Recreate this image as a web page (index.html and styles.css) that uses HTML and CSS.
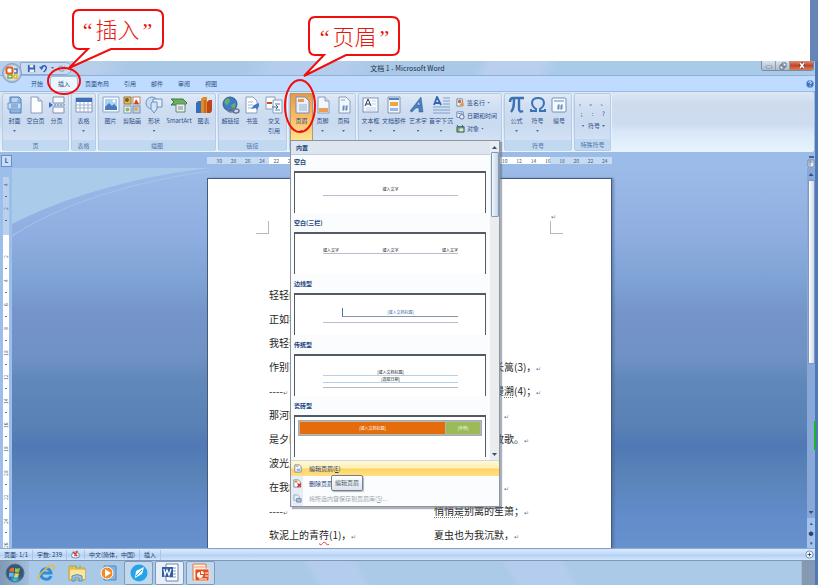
FILE: index.html
```html
<!DOCTYPE html>
<html lang="zh-CN">
<head>
<meta charset="utf-8">
<title>文档 1 - Microsoft Word</title>
<link rel="stylesheet" href="styles.css">
</head>
<body>
<div class="blank"></div>
<main class="app">
  <header class="titlebar">
    <div class="qat">
      <button aria-label="保存"><svg viewBox="0 0 10 10"><path d="M1 1h8v8H1z" fill="#3c62a8"/><path d="M3 1h4v3H3zM3 6h5v3H3z" fill="#e8f0fa"/></svg></button>
      <button aria-label="撤消"><svg viewBox="0 0 10 10"><path d="M3 5c0-4 6-4 5 0c0 2-2 3-3 4" fill="none" stroke="#2f62b4" stroke-width="1.6"/><path d="M0 3l5 0l-2 4z" fill="#2f62b4"/></svg></button>
      <span class="caret"></span>
      <button aria-label="恢复"><svg viewBox="0 0 10 10"><path d="M7 4c-2-3-6-1-5 2c1 2 4 3 6 1" fill="none" stroke="#9ab0cf" stroke-width="1.5"/><path d="M9 1v5H5z" fill="#9ab0cf"/></svg></button>
    </div>
    <h1>文档 1 - Microsoft Word</h1>
    <div class="winbtns">
      <button aria-label="最小化"><svg viewBox="0 0 14 10"><rect x="4" y="5" width="6" height="2" rx="1" fill="#fff" stroke="#5a6a80" stroke-width=".7"/></svg></button>
      <button aria-label="还原"><svg viewBox="0 0 14 10"><path d="M6 2h4v4H6zM4 4h4v4H4z" fill="#fff" stroke="#5a6a80"/></svg></button>
      <button class="close" aria-label="关闭"><svg viewBox="0 0 14 10"><path d="M5 2l4 5M9 2l-4 5" stroke="#7c3430" stroke-width="3"/><path d="M5 2l4 5M9 2l-4 5" stroke="#fff" stroke-width="1.6"/></svg></button>
    </div>
    <button class="office" aria-label="Office"><svg viewBox="0 0 20 20"><defs><radialGradient id="orb"><stop offset="0" stop-color="#fff"/><stop offset=".7" stop-color="#dbe4ef"/><stop offset="1" stop-color="#91a6c4"/></radialGradient></defs><circle cx="10" cy="10" r="9.5" fill="url(#orb)" stroke="#8da2bf"/><rect x="4.500" y="4.500" width="6" height="6" rx="1.500" fill="#fff" stroke="#e2591c" stroke-width="2"/><path d="M12 6h3v4h-3" fill="none" stroke="#3f78c4" stroke-width="1.5"/><path d="M6 12h4v3H6z" fill="#fff" stroke="#79ab39" stroke-width="1.5"/><path d="M12 12h3v3h-3z" fill="#fff" stroke="#eeb11b" stroke-width="1.5"/></svg></button>
  </header>
  <nav class="tabs">
    <a href="#home">开始</a><a href="#insert" class="active">插入</a><a href="#layout">页面布局</a><a href="#refs">引用</a><a href="#mail">邮件</a><a href="#review">审阅</a><a href="#view">视图</a>
    <button class="help" aria-label="帮助"><svg viewBox="0 0 8 8"><circle cx="4" cy="4" r="3.7" fill="#3572c6" stroke="#8ab5e8" stroke-width=".6"/><path d="M2.7 3c0-2 3-1.500 2.500 0L4 4.400M4 5.500v1" stroke="#fff" fill="none"/></svg></button>
  </nav>
  <section class="ribbon">
    <div class="group">
      <div class="items">
        <button class="item"><svg viewBox="0 0 18 18"><path d="M4 1h9l2 2v14H4z" fill="#8eb5e2" stroke="#5582bd"/><path d="M6 3h6M6 5h5" stroke="#e9f2fc"/><path d="M2 7h13v6H2z" fill="#c9def5" stroke="#6b98cf"/><path d="M5 9h7M5 11h7" stroke="#5582bd"/></svg><span>封面</span><i class="caret"></i></button>
        <button class="item"><svg viewBox="0 0 18 18"><path d="M4 1h7l4 4v12H4z" fill="#fbfdff" stroke="#8a9cb8"/><path d="M11 1v4h4" fill="#cfdded" stroke="#8a9cb8"/></svg><span>空白页</span></button>
        <button class="item"><svg viewBox="0 0 18 18"><path d="M5 1h11v6H5zM5 11h11v6H5z" fill="#f5f8fc" stroke="#8293ad"/><path d="M6 9h11" stroke="#4a7cc2" stroke-dasharray="2 1"/><path d="M1 6v6l4-3z" fill="#3d70ba"/></svg><span>分页</span></button>
      </div>
      <h2>页</h2>
    </div>
    <div class="group">
      <div class="items">
        <button class="item"><svg viewBox="0 0 18 18"><path d="M1 2h16v14H1z" fill="#fff" stroke="#7c96bd"/><path d="M1 2h16v4H1z" fill="#3e70ba"/><path d="M1 9h16M1 12h16M5 6v10M9 6v10M13 6v10" stroke="#9fb3d0"/></svg><span>表格</span><i class="caret"></i></button>
      </div>
      <h2>表格</h2>
    </div>
    <div class="group">
      <div class="items">
        <button class="item"><svg viewBox="0 0 18 18"><path d="M1 1h16v15H1z" fill="#f8fbff" stroke="#8aa7cb"/><path d="M3 3h12v11H3z" fill="#a9d0f5"/><path d="M3 14v-3l4-4 3 3 2-2 3 3v3z" fill="#4a7bb7"/><circle cx="12" cy="5" r="1.500" fill="#fff"/></svg><span>图片</span></button>
        <button class="item mid"><svg viewBox="0 0 18 18"><rect x="1" y="1" width="7" height="7" fill="#e7bd52" stroke="#98793c"/><rect x="10" y="1" width="7" height="7" fill="#fff" stroke="#b7866b"/><path d="M11 8l2-5 3 5z" fill="#c34826"/><rect x="1" y="10" width="7" height="7" fill="#f5f3dd" stroke="#739ad0"/><rect x="10" y="10" width="7" height="7" fill="#bcd5ef" stroke="#7890b7"/><circle cx="4" cy="4" r="2" fill="#7c572b"/><circle cx="4.500" cy="13.500" r="2" fill="#8eb46b"/><circle cx="13" cy="13" r="2" fill="#e1ab4d"/></svg><span>剪贴画</span></button>
        <button class="item mid"><svg viewBox="0 0 18 18"><circle cx="7" cy="7" r="6" fill="#c7dcf3" stroke="#6d91c2"/><path d="M8 3h9v8H8z" fill="#e1edfb" stroke="#6d91c2"/><path d="M7 6h5v7l-3 4-3-4V8z" fill="#d4e4f7" stroke="#6d91c2"/></svg><span>形状</span><i class="caret"></i></button>
        <button class="item smart"><svg viewBox="0 0 18 18"><path d="M1 3h12l4 4-4 4v-2H1l3-3z" fill="#6cad5c" stroke="#387b40"/><path d="M6 8h9v8H6z" fill="#eaf3e6" stroke="#658579"/><path d="M8 11h5M8 13h5" stroke="#758a9e"/></svg><span>SmartArt</span></button>
        <button class="item"><svg viewBox="0 0 18 18"><path d="M1 7l2-2h3v12H1z" fill="#326fbd"/><path d="M6 3l2-2h4v16H6z" fill="#e58a22"/><path d="M12 6l2-2h3v11l-2 2h-3z" fill="#c6441d"/><path d="M10 4v13M15 7v10" stroke="#a84f15"/></svg><span>图表</span></button>
      </div>
      <h2>插图</h2>
    </div>
    <div class="group">
      <div class="items">
        <button class="item"><svg viewBox="0 0 18 18"><circle cx="8" cy="8" r="7" fill="#397dc8" stroke="#365c90"/><path d="M3 4c3-3 5-1 5 1s-3 2-2 4c-2 0-4-2-3-5zM9 9l4-2c2 2-1 6-3 6z" fill="#69ad69"/><ellipse cx="9" cy="14" rx="3" ry="2" fill="none" stroke="#667891" stroke-width="1.500"/><ellipse cx="14" cy="15" rx="3" ry="2" fill="none" stroke="#667891" stroke-width="1.500"/></svg><span>超链接</span></button>
        <button class="item mid"><svg viewBox="0 0 18 18"><path d="M3 1h7l4 4v12H3z" fill="#fbfdff" stroke="#8a9cb8"/><path d="M5 6h5M5 9h5M5 12h4" stroke="#a5b5cb"/><path d="M8 13l3-4 5-2v3l-2 4-1-2z" fill="#3f78c3"/></svg><span>书签</span></button>
        <button class="item mid"><svg viewBox="0 0 18 18"><path d="M1 1h9v12H1z" fill="#fbfdff" stroke="#8a9cb8"/><path d="M8 4h9v13H8z" fill="#f5f9ff" stroke="#8a9cb8"/><path d="M2 6h5v2H2z" fill="#ce4c28"/><path d="M10 8h5M10 14h5" stroke="#587fbb"/><path d="M7 11h6l-2-2M13 11l-2 2" stroke="#3868ac" fill="none"/></svg><span>交叉<br>引用</span></button>
      </div>
      <h2>链接</h2>
    </div>
    <div class="group">
      <div class="items">
        <div class="menuhost">
        <button class="item pressed" aria-expanded="true"><svg viewBox="0 0 18 18"><path d="M3 1h9l4 4v12H3z" fill="#e8f0fb" stroke="#7c8dac"/><path d="M5 3h6v3H5z" fill="#ef9a42"/><path d="M6 8h8v7H6z" fill="#bed1ea"/></svg><span>页眉</span><i class="caret"></i></button>
        <div class="gallery">
          <h3>内置</h3>
          <div class="scroll">
            <div class="list">
              <h4>空白</h4>
              <div class="preview blank1"><p>键入文字</p><hr></div>
              <h4>空白(三栏)</h4>
              <div class="preview three"><p><span>键入文字</span><span>键入文字</span><span>键入文字</span></p><hr></div>
              <h4>边线型</h4>
              <div class="preview edge"><p>[键入文档标题]</p><hr></div>
              <h4>传统型</h4>
              <div class="preview classic"><p>[键入文档标题]</p><hr><p>[选取日期]</p><hr><hr class="grey"></div>
              <h4>瓷砖型</h4>
              <div class="preview tile"><p><span>[键入文档标题]</span><span>[年份]</span></p></div>
            </div>
            <div class="bar"><i class="up"></i><b></b><i class="down"></i></div>
          </div>
          <div class="menu">
            <button class="hot"><svg viewBox="0 0 10 10"><path d="M2 1h5l2 2v6H2z" fill="#fff" stroke="#7189ae"/><path d="M3 2h3v1H3z" fill="#e77b2b"/><path d="M4 5h4v3H4z" fill="#9db9de"/></svg><span>编辑页眉(<u>E</u>)</span></button>
            <button><svg viewBox="0 0 10 10"><path d="M1 1h5l2 2v6H1z" fill="#fff" stroke="#7189ae"/><path d="M2 2h3v2H2z" fill="#e77b2b"/><path d="M5 5l4 4M9 5L5 9" stroke="#d92c20" stroke-width="1.500"/></svg><span>删除页眉</span></button>
            <button disabled><svg viewBox="0 0 10 10"><path d="M1 1h4l2 2v4H1z" fill="#e6edf7" stroke="#93a6c3"/><path d="M4 5h5v4H4z" fill="#a9bddb" stroke="#758db3"/></svg><span>将所选内容保存到页眉库(<u>S</u>)...</span></button>
            <div class="tip" role="tooltip">编辑页眉</div>
          </div>
        </div>
        </div>
        <button class="item"><svg viewBox="0 0 18 18"><path d="M4 1h7l4 4v12H4z" fill="#f2f7fd" stroke="#8a9cb8"/><path d="M11 1v4h4" fill="#d7e2f0" stroke="#8a9cb8"/><path d="M5 12h9v4H5z" fill="#ee9b55"/></svg><span>页脚</span><i class="caret"></i></button>
        <button class="item"><svg viewBox="0 0 18 18"><path d="M4 1h7l4 4v12H4z" fill="#f2f7fd" stroke="#8a9cb8"/><path d="M6 3h4v2H6z" fill="#b9cce5"/><path d="M9 9l-1 6M12 9l-1 6M7 11h6M7 13h6" stroke="#4c78b5" stroke-width=".8"/></svg><span>页码</span><i class="caret"></i></button>
      </div>
      <h2>页眉和页脚</h2>
    </div>
    <div class="group">
      <div class="items">
        <button class="item"><svg viewBox="0 0 18 18"><rect x="1" y="2" width="15" height="14" fill="#f7faff" stroke="#8296b4"/><path d="M3 10l3-7 3 7M4 8h4" stroke="#2c3b55" fill="none"/><path d="M10 5h4M10 8h4M4 12h10M4 14h10" stroke="#c3d2e6"/></svg><span>文本框</span><i class="caret"></i></button>
        <button class="item parts"><svg viewBox="0 0 18 18"><path d="M3 1h12v16H3z" fill="#f3f7fd" stroke="#8296b4"/><path d="M4 2h10v2H4z" fill="#5284c2"/><path d="M5 6h8v4H5z" fill="#eda742"/><path d="M5 12h8v3H5z" fill="#9abae1"/></svg><span>文档部件</span><i class="caret"></i></button>
        <button class="item mid"><svg viewBox="0 0 18 18"><path d="M1 15L12 1l2 15h-4l0-4H7l-4 4zM8 9h3l-1-4z" fill="#4b7fbd" stroke="#2f5f9e" stroke-width=".5"/></svg><span>艺术字</span><i class="caret"></i></button>
        <button class="item drop"><svg viewBox="0 0 18 18"><path d="M2 9l3-8 4 8M3 7h5" stroke="#3267ae" stroke-width="1.800" fill="none"/><path d="M11 2h7M11 5h7M11 8h7M1 11h17M1 14h17M1 17h17" stroke="#7f9fcd"/></svg><span>首字下沉</span><i class="caret"></i></button>
        <div class="stack">
          <button><svg viewBox="0 0 10 10"><path d="M1 1h6v8H1z" fill="#fff" stroke="#697e9e"/><circle cx="4" cy="4" r="2" fill="#c96a3b"/><path d="M3 8l5-4 1 5z" fill="#de9b48"/></svg>签名行<i class="caret"></i></button>
          <button><svg viewBox="0 0 10 10"><path d="M1 1h7v6H1z" fill="#fff" stroke="#5d7eae"/><path d="M2 3h5" stroke="#5d7eae"/><circle cx="6.500" cy="6.500" r="2.500" fill="#e6effb" stroke="#49648e"/></svg>日期和时间</button>
          <button><svg viewBox="0 0 10 10"><path d="M1 3h8v6H1z" fill="#79ae62" stroke="#3f5f63"/><path d="M1 1l3 3M7 1v3" stroke="#2e5595"/><path d="M4 5h4v3H4z" fill="#dce8f5"/></svg>对象<i class="caret"></i></button>
        </div>
      </div>
      <h2>文本</h2>
    </div>
    <div class="group">
      <div class="items">
        <button class="item"><svg viewBox="0 0 18 18"><path d="M2 6c0-3 1-4 3-4h11M6 3c0 6 0 10-3 13M11 3v10c0 3 2 3 4 2" fill="none" stroke="#3c72b5" stroke-width="2.400"/></svg><span>公式</span><i class="caret"></i></button>
        <button class="item"><svg viewBox="0 0 18 18"><path d="M2 13v2h5v-2C1 9 2 2 9 2s8 7 2 11v2h5v-2" fill="none" stroke="#3c72b5" stroke-width="2"/></svg><span>符号</span><i class="caret"></i></button>
        <button class="item mid"><svg viewBox="0 0 18 18"><rect x="2" y="2" width="14" height="14" rx="1" fill="#f5f9fe" stroke="#7790b5"/><path d="M4 5h10" stroke="#abc0de" stroke-width="2"/><path d="M9 8l-1 6M12 8l-1 6M7 10h6M7 12h6" stroke="#4c78b5" stroke-width=".8"/></svg><span>编号</span></button>
      </div>
      <h2>符号</h2>
    </div>
    <div class="group">
      <div class="symbols">
        <button>，</button><button>。</button><button>、</button>
        <button>;</button><button>:</button><button>?</button>
        <button class="wide"><b>•</b> 符号<i class="caret"></i></button>
      </div>
      <h2>特殊符号</h2>
    </div>
  </section>
  <div class="rulerrow">
    <button class="tabsel" aria-label="制表符">L</button>
    <div class="hruler">
      <span>30</span><span>28</span><span>26</span><span>24</span><span>22</span><span>20</span><span>18</span><span>16</span><span>14</span><span>12</span><span>10</span><span>8</span><span>6</span><span>4</span><span>2</span><span></span><span>2</span><span>4</span><span>6</span><span>8</span><span>10</span><span>12</span><span>14</span><span>16</span><span>18</span><span>20</span><span>22</span><span>24</span>
    </div>
    <button class="rulerbtn" aria-label="标尺"><svg viewBox="0 0 8 14"><path d="M2 3h5" stroke="#33445e" stroke-width="1.500"/><path d="M1 6h6v7H1z" fill="#e9eff8" stroke="#7387a5"/><path d="M2 8h4M3 6v6" stroke="#7387a5"/></svg></button>
  </div>
  <div class="workspace">
    <div class="vruler"><div>
      <span>4</span><span>2</span><span></span><span>2</span><span>4</span><span>6</span><span>8</span><span>10</span><span>12</span><span>14</span><span>16</span><span>18</span><span>20</span><span>22</span><span>24</span><span>26</span>
    </div></div>
    <div class="canvas">
      <svg class="swoosh" viewBox="0 0 195 60" preserveAspectRatio="none" aria-hidden="true"><path d="M0 0h195C120 8 50 30 0 56z" fill="#abcbea"/><path d="M0 68C50 35 120 13 195 3" fill="none" stroke="#a7c5ea"/></svg>
      <article class="page">
        <div class="marks"><i></i><i><s>↵</s></i></div>
        <div class="poem">
          <div>
            <p>轻轻的我走了，</p><p>正如我轻轻的来；</p><p>我轻轻的招手，</p><p>作别西天的云彩。</p><p>----<s>↵</s></p><p>那河畔的金柳，</p><p>是夕阳中的新娘；</p><p>波光里的艳影，</p><p>在我的心头荡漾。</p><p>----<s>↵</s></p><p>软泥上的青<em class="red">荇</em>(1)，<s>↵</s></p>
          </div>
          <div>
            <p></p><p></p><p></p><p>寻梦？撑一支长篙(3)，<s>↵</s></p><p>向青草更青处漫<em>溯</em>(4)；<s>↵</s></p><p>满载一船星辉，<s>↵</s></p><p>在星辉斑斓里放歌。<s>↵</s></p><p></p><p>但我不能放歌，<s>↵</s></p><p><em>悄悄是</em>别离的笙箫；<s>↵</s></p><p>夏虫也为我沉默，<s>↵</s></p>
          </div>
        </div>
      </article>
    </div>
    <div class="vscroll"><i class="up"></i><b></b><i class="down"></i><em>▴</em><em>●</em><em>▾</em></div>
  </div>
  <footer class="status">
    <span>页面: 1/1</span><span>字数: 239</span><span><svg viewBox="0 0 10 10"><path d="M1 4l4-2 4 2v4l-4 1-4-1z" fill="#fff" stroke="#6382b0"/><path d="M2 2l5 5M7 1L4 7" stroke="#d53a29" stroke-width="1.500"/></svg></span><span>中文(简体，中国)</span><span>插入</span>
    <button aria-label="放大"><svg viewBox="0 0 10 10"><circle cx="5" cy="5" r="4" fill="#f4f8fd" stroke="#6e83a4"/><path d="M5 3v4M3 5h4" stroke="#334b74"/></svg></button>
  </footer>
</main>
<nav class="taskbar">
  <button class="start" aria-label="开始"><svg viewBox="0 0 20 20"><defs><radialGradient id="win" cy=".9"><stop offset="0" stop-color="#35d0f5"/><stop offset=".6" stop-color="#2c6796"/><stop offset="1" stop-color="#385573"/></radialGradient></defs><circle cx="10" cy="10" r="9" fill="url(#win)" stroke="#52718f"/><path d="M5 6q2-2 4-1v4q-2-1-5 0z" fill="#ef6534"/><path d="M10 5q2 1 5 0l-1 4q-2 1-4 0z" fill="#8dcc47"/><path d="M4 10q3-1 5 0l-1 4q-2-1-4 0z" fill="#59b9f1"/><path d="M10 10q2 1 4 0l-1 4q-2 1-4 0z" fill="#fccc3f"/></svg></button>
  <button aria-label="Internet Explorer"><svg viewBox="0 0 20 20"><path d="M15 13c-2 5-10 4-10-2s9-8 10-1H6" fill="none" stroke="#2d8edb" stroke-width="3"/><path d="M3 17C-1 14 14 0 18 3c1 1 0 3-1 4" fill="none" stroke="#ecb83a" stroke-width="1.500"/></svg></button>
  <button aria-label="资源管理器"><svg viewBox="0 0 20 20"><path d="M2 3h6l1 2h9v12H2z" fill="#efc659" stroke="#ca9d3d"/><path d="M3 7h15v9H3z" fill="#fbe69b"/><path d="M5 2v4M9 2v4M13 2v4" stroke="#87b866"/><path d="M5 18v-5q5-3 10 0v5h-3v-3H8v3z" fill="#96c5ea" stroke="#5990bd"/></svg></button>
  <button aria-label="媒体播放器"><svg viewBox="0 0 20 20"><path d="M6 3h12v14H6z" fill="#83b3e0" stroke="#5487be"/><circle cx="9" cy="10" r="6" fill="#f58a23" stroke="#fff"/><path d="M7 6l6 4-6 4z" fill="#fff"/></svg></button>
  <button class="open" aria-label="浏览器"><svg viewBox="0 0 20 20"><circle cx="10" cy="10" r="8.500" fill="#24a5e8"/><path d="M6 15l1-7 8-4-2 7z" fill="#fff"/><path d="M7 13l6-6" stroke="#24a5e8"/></svg></button>
  <button class="open current" aria-label="Word"><svg viewBox="0 0 20 20"><path d="M6 1h12v17H6z" fill="#fff" stroke="#6c83a8"/><path d="M9 5h7M9 8h7M9 11h7M9 14h7" stroke="#7798c9"/><path d="M2 4h11v10H2z" fill="#315ea5"/><path d="M4 6l1 6 2-5 2 5 2-6" fill="none" stroke="#fff" stroke-width="1.300"/></svg></button>
  <button class="open" aria-label="PowerPoint"><svg viewBox="0 0 20 20"><path d="M2 1h13v16H2z" fill="#fff1df" stroke="#d77b4c"/><path d="M3 4h11" stroke="#e9a078"/><path d="M4 6h14v12H4z" fill="#e4511e" stroke="#fbe3d3"/><path d="M9 9a3 3 0 1 0 3 3H9z" fill="#fff"/><path d="M10 8a3 3 0 0 1 3 3h-3z" fill="#fff"/><path d="M14 10h3M14 13h3M8 16h8" stroke="#fff"/></svg></button>
  <button class="desktop" aria-label="显示桌面"></button>
</nav>
<div class="greenmark"></div>
<div class="callout first">
  <svg viewBox="0 0 120 90" aria-hidden="true"><g fill="none" stroke="#f00d0d" stroke-width="2"><path d="M36 2h77q7 0 7 7v25q0 7-7 7H68L26 60L45 41h-9q-6 0-6-7V9q0-7 6-7z" fill="#fff"/><ellipse cx="21" cy="73" rx="16" ry="13"/></g></svg>
  <p><q>“</q>插入<q>”</q></p>
</div>
<div class="callout second">
  <svg viewBox="0 0 120 120" aria-hidden="true"><g fill="none" stroke="#f00d0d" stroke-width="2"><path d="M35 2h77q7 0 7 7v24q0 7-7 7H66L24 61L44 40h-9q-6 0-6-7V9q0-7 6-7z" fill="#fff"/><ellipse cx="20" cy="91" rx="15" ry="26"/></g></svg>
  <p><q>“</q>页眉<q>”</q></p>
</div>
</body>
</html>
```
FILE: styles.css
```css
* { box-sizing: border-box; margin: 0; padding: 0; }
body {
  min-height: 100vh;
  display: flex;
  flex-direction: column;
  position: relative;
  overflow: hidden;
  background: #5079b8;
  font: 6px/10px "Noto Sans CJK SC", "Noto Sans", sans-serif;
  color: #2c4f87;
}
button {
  font: inherit;
  color: inherit;
  border: 0;
  background: none;
  display: flex;
  align-items: center;
  justify-content: center;
}
a { color: inherit; text-decoration: none; }
i, em { font-style: normal; }
s { text-decoration: none; color: #66748c; font-size: 6px; }
svg { display: block; flex: none; }
h1, h2 { font-weight: 400; }

.caret {
  width: 3px;
  height: 2px;
  background: #4a6da6;
  clip-path: polygon(0 0, 100% 0, 50% 100%);
}

.blank {
  height: 61px;
  background: #fff;
  border-right: 8px solid #6485b5;
}

.app {
  flex: 1;
  display: flex;
  flex-direction: column;
  margin-right: 3px;
  background: #9bbbe8;
}

/* Title bar */
.titlebar {
  position: relative;
  height: 15px;
  display: grid;
  grid-template-columns: 1fr auto 1fr;
  align-items: center;
  background: linear-gradient(115deg, #b7cfeb 0 12%, #a9c8e6 16% 30%, #b5cdec 34% 42%, #a9c9e7 46% 58%, #b9cfed 60% 66%, #aacbe8 68%);
  border-bottom: 1px solid #8fb0d9;
}
.titlebar h1 { font-size: 7px; color: #1d2c44; }
.qat {
  justify-self: start;
  display: flex;
  align-items: center;
  gap: 3px;
  margin-left: 20px;
  padding: 0 5px 0 6px;
  height: 13px;
  border: 1px solid #8ea9cd;
  border-radius: 0 7px 7px 0;
  background: #c8dbf2;
}
.qat svg { width: 9px; height: 9px; }
.winbtns {
  justify-self: end;
  align-self: start;
  display: flex;
  margin-right: 1px;
  border: 1px solid #7c8ba2;
  border-top: 0;
  border-radius: 0 0 3px 3px;
  overflow: hidden;
}
.winbtns button { width: 14px; height: 9px; background: linear-gradient(#d8e2ee, #aabdd3); border-right: 1px solid #8d9db3; }
.winbtns svg { width: 14px; height: 10px; }
.winbtns .close { width: 23px; border: 0; background: linear-gradient(#d9917a, #c2452b 50%, #d77e53); }
.office { position: absolute; left: 2px; top: 2px; z-index: 2; }
.office svg { width: 20px; height: 20px; }

/* Tabs */
.tabs {
  height: 15px;
  display: flex;
  align-items: flex-end;
  gap: 1px;
  padding-left: 24px;
  background: #bfdbff;
}
.tabs a { padding: 2px 7px; border-radius: 2px 2px 0 0; }
.tabs .active { background: #edf5fe; box-shadow: 0 0 0 1px #a3bee3; }
.tabs .help { margin: 0 1px 3px auto; }
.help svg { width: 8px; height: 8px; }

/* Ribbon */
.ribbon {
  height: 62px;
  display: flex;
  gap: 2px;
  padding: 1px 1px 1px 2px;
  border: solid #9bbbe3;
  border-width: 1px 1px 1px 0;
  border-radius: 0 3px 3px 0;
  background: linear-gradient(#dde8f5, #cddbed 20%, #cddcee 55%, #d8e7f8 65%, #e8f3fd);
}
.group {
  display: flex;
  flex-direction: column;
  border: 1px solid #b6cce6;
  border-radius: 2px;
  padding: 0 1px;
  box-shadow: 1px 0 #e9f2fb;
  background: linear-gradient(#dfe9f6, #cfdef1 25%, #cadaef 55%, #d7e6f8);
}
.group h2 {
  margin: auto -1px 0;
  font-size: 6px;
  line-height: 11px;
  text-align: center;
  background: #c1d8f1;
  color: #5273a5;
}
.items { display: flex; }
.item {
  width: 21px;
  height: 46px;
  padding-top: 2px;
  flex-direction: column;
  justify-content: flex-start;
  white-space: nowrap;
}
.item svg { width: 18px; height: 18px; margin-bottom: 2px; }
.item .caret { margin-top: 4px; }
.item.mid { width: 22px; }
.item.smart { width: 28px; }
.item.parts { width: 26px; }
.item.drop { width: 24px; }
.item.pressed { background: linear-gradient(#e39b4b, #fbb45f 40%, #fde28d); box-shadow: 0 0 0 1px #b59a6c; }
.stack { width: 47px; padding: 2px 0 0 3px; }
.stack button { gap: 2px; height: 13px; }
.stack svg { width: 9px; height: 9px; }
.symbols {
  display: grid;
  grid-template-columns: repeat(3, 11px);
  padding-top: 3px;
  color: #34435c;
}
.symbols button { height: 11px; }
.symbols .wide { grid-column: span 3; gap: 2px; height: 14px; color: #2c4f87; }

/* Header gallery */
.menuhost { position: relative; z-index: 5; }
.gallery {
  position: absolute;
  left: -1px;
  top: 46px;
  width: 210px;
  background: #fafcfd;
  border: 1px solid #8d959f;
  box-shadow: 2px 2px 1px #5f6d8088;
  color: #1c4480;
}
.gallery h3, .gallery h4 { font-size: 6px; }
.gallery h3 { line-height: 13px; padding-left: 5px; background: #dde6ef; border-bottom: 1px solid #c3cedb; margin-right: 8px; }
.scroll { display: flex; }
.list { flex: 1; padding: 0 4px 3px 3px; }
.gallery h4 { line-height: 14px; margin: 3px 0 2px; }
.gallery h4:first-child { margin-top: 0; }
.preview {
  height: 42px;
  border: solid #545966;
  border-width: 2px 1px 0;
  padding: 13px 27px 0 28px;
  background: #fff;
  font-size: 4px;
  line-height: 6px;
  color: #222;
  text-align: center;
}
.preview hr { border: 0; border-top: 1px solid #b9bdd0; }
.blank1 hr { margin-top: 3px; }
.three p { display: flex; justify-content: space-between; }
.edge { color: #3a6cab; }
.edge p { margin-left: 19px; border-left: 1px solid #3d75bd; border-bottom: 1px solid #8794a5; line-height: 8px; }
.edge hr { margin-top: 5px; }
.classic hr { border-color: #b7d0e8; }
.classic .grey { margin-top: 4px; border-color: #bbb; }
.tile { padding: 3px; }
.tile p { display: grid; grid-template-columns: 1fr 34px; gap: 1px; border: 1px solid #aaa; padding: 1px; line-height: 12px; background: #b5b5b5; color: #fff; }
.tile span { background: #e56c0a; }
.tile span + span { background: #9bbb59; }
.bar { width: 9px; margin-top: -14px; background: #ebecee; display: flex; flex-direction: column; align-items: center; }
.bar b { width: 8px; height: 65px; margin-top: 3px; border: 1px solid #8099bb; border-radius: 1px; background: linear-gradient(90deg, #f4f8fd, #c3d4e8); }
.up, .down { width: 5px; height: 3px; background: #34527f; clip-path: polygon(50% 0, 100% 100%, 0 100%); margin-top: 5px; }
.down { clip-path: polygon(0 0, 100% 0, 50% 100%); margin: auto 0 4px; }
.menu { position: relative; border-top: 1px solid #d2d7de; background: linear-gradient(90deg, #e7edf5 12px, #fafcfd 12px); }
.menu button { width: 100%; height: 15px; justify-content: flex-start; gap: 7px; padding-left: 2px; white-space: nowrap; }
.menu svg { width: 9px; height: 9px; }
.menu .hot { background: linear-gradient(#fff8d9, #fff0b4 45%, #ffd464 55%, #ffdf85); }
.menu button:disabled { color: #9ca3ad; }
.tip {
  position: absolute;
  left: 40px;
  top: 14px;
  padding: 2px 3px;
  border: 1px solid #777f8b;
  border-radius: 2px;
  background: linear-gradient(#fff, #dce3ee);
  box-shadow: 1px 1px 1px #7778;
  color: #4c5668;
}

/* Rulers */
.rulerrow { height: 15px; display: flex; align-items: center; justify-content: space-between; background: #9bbbe8; }
.tabsel { width: 11px; height: 12px; margin: 1px 0 0 1px; border: 1px solid #6a8fc4; background: #c8dcf5; font-size: 6px; font-weight: 700; }
.hruler {
  display: grid;
  grid-template-columns: repeat(28, 1fr);
  width: 405px;
  padding-left: 5px;
  font-size: 5px;
  line-height: 7px;
  text-align: center;
  color: #4d5b70;
  background: linear-gradient(90deg, #c5daf3 62px, #fff 62px 343px, #c5daf3 343px);
}
.rulerbtn svg { width: 8px; height: 14px; }
.workspace { flex: 1; display: flex; }
.vruler { width: 12px; padding: 9px 3px 0; background: #9dbdeb; }
.vruler div {
  height: 371px;
  overflow: hidden;
  background: linear-gradient(#b9d1ef 58px, #fff 58px);
}
.vruler span {
  height: 24px;
  display: flex;
  align-items: center;
  justify-content: center;
  writing-mode: vertical-rl;
  font-size: 5px;
  line-height: 6px;
  color: #4d5b70;
  transform: rotate(180deg);
  background: linear-gradient(#5d6b80, #5d6b80) center top / 2px 1px no-repeat;
}
.vruler span:first-child { margin-top: -4px; }
.canvas {
  flex: 1;
  position: relative;
  display: flex;
  justify-content: center;
  padding-top: 10px;
  background: linear-gradient(#9cbbe8, #8fade0 18%, #7da2d3 30%, #7595ca 38%, #6f91c4 50%, #6188ba 56%, #5981b5 68%, #5079b5 73%, #5a84b8 81%, #628ccb 92%, #6892cc);
}
.swoosh { position: absolute; left: 0; top: 0; width: 25%; height: 60px; overflow: visible; }
.page {
  position: relative;
  width: 405px;
  background: #fff;
  border: solid #45597a;
  border-width: 1px 1px 0;
  box-shadow: 2px 0 2px #4561907a;
  color: #1e1e1e;
}
.marks { display: flex; justify-content: space-between; padding: 42px 48px 0; height: 104px; }
.marks i { width: 13px; height: 13px; border: solid #b5b8c2; border-width: 0 1px 1px 0; }
.marks i + i { border-width: 0 0 1px 1px; }
.marks s { display: block; margin: -9px 0 0; }
.poem { display: grid; grid-template-columns: 165px 1fr; padding-left: 61px; font-size: 10px; line-height: 24px; white-space: nowrap; }
.poem p { height: 24px; }
.poem em { text-decoration: underline dotted #5c8a6a 1px; text-underline-offset: 2px; }
.poem .red { text-decoration: underline wavy #e33 1px; }
.vscroll { width: 8px; display: flex; flex-direction: column; align-items: center; background: #88a8d8; }
.vscroll b { width: 7px; height: 184px; margin-top: 4px; border: 1px solid #8299bd; background: linear-gradient(90deg, #fff, #cbd9ec); }
.vscroll em { font-size: 5px; color: #2c456f; background: #a5c2ec; width: 8px; text-align: center; }

/* Status bar */
.status {
  height: 12px;
  display: flex;
  align-items: center;
  background: linear-gradient(#dcebfc, #c0daf9 45%, #b2d0f5 55%, #d2e5fb);
  border-top: 1px solid #8cacd8;
  color: #203d6c;
}
.status span { padding: 0 4px; border-right: 1px solid #aac4e6; }
.status svg { width: 9px; height: 9px; }
.status button { margin-left: auto; padding-right: 1px; }

/* Taskbar */
.taskbar {
  height: 25px;
  display: flex;
  gap: 2px;
  margin-right: 3px;
  border-top: 1px solid #7f97b4;
  background: linear-gradient(60deg, #aac9e7 0 38%, #b4cced 39% 44%, #abcae8 45% 62%, #b4cdef 63% 69%, #abcae8 70%);
}
.taskbar button { width: 29px; }
.taskbar svg { width: 20px; height: 20px; }
.taskbar .open { border: 1px solid #7f9abb; border-radius: 2px; background: #c2d8ef; }
.taskbar .current { background: #e6eff9; }
.taskbar .start { background: linear-gradient(90deg, #8099b4, #a2bfdd); }
.taskbar .desktop { width: 14px; margin-left: auto; background: #8499b2; border-left: 1px solid #a5b8cd; }
.greenmark { position: absolute; right: 2px; top: 421px; width: 2px; height: 29px; background: #1fb32b; }

/* Callouts */
.callout { position: absolute; z-index: 10; color: #e8170c; pointer-events: none; }
.callout svg { width: 120px; overflow: visible; }
.first { left: 43px; top: 8px; }
.second { left: 280px; top: 15px; }
.callout p {
  position: absolute;
  left: 29px;
  top: 2px;
  width: 91px;
  display: flex;
  justify-content: center;
  gap: 3px;
  font-size: 22px;
  line-height: 36px;
  font-weight: 300;
}
.callout q { quotes: none; font-family: "Liberation Serif", serif; line-height: 42px; }
.callout q::before, .callout q::after { content: none; }
```
